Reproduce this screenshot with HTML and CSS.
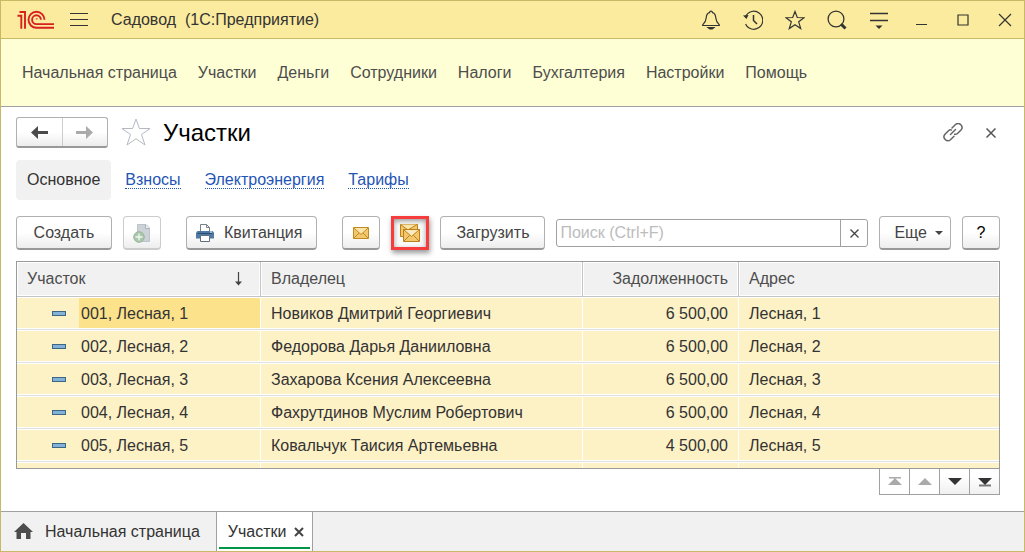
FILE: index.html
```html
<!DOCTYPE html>
<html lang="ru">
<head>
<meta charset="utf-8">
<title>Садовод (1С:Предприятие)</title>
<link rel="stylesheet" href="styles.css">
</head>
<body>
<div class="window">
  <header class="titlebar">
    <svg class="logo" width="38" height="20" viewBox="0 0 38 20" fill="none" stroke="#d9201f" stroke-width="1.9" aria-label="1С">
      <path d="M0.5 5.800H4.300V18.700M2.500 2H8V18.700"/>
      <path d="M27.500 9.700A8 8 0 1 0 19.500 17.800H37"/>
      <path d="M23.900 9.700A4.400 4.400 0 1 0 19.500 14.100H37"/>
      <path d="M20.500 9.200A1 1 0 0 0 19 9.200" stroke-width="1.200"/>
    </svg>
    <button class="icon-button menu-button" aria-label="Главное меню"><svg width="18" height="16" viewBox="0 0 18 16" stroke="#333" stroke-width="1.2"><path d="M0 1.500H18M0 7.500H18M0 13.500H18"/></svg></button>
    <span class="app-name">Садовод&nbsp; (1С:Предприятие)</span>
    <div class="system-buttons">
      <button class="icon-button" aria-label="Уведомления"><svg width="20" height="20" viewBox="0 0 20 20" fill="none" stroke="#333" stroke-width="1.2"><path d="M10 1.2C9 1.2 8.6 1.8 8.5 2.6C5.8 3.4 5.3 5.6 5.2 8C5 11.500 3.500 13 1.700 14.800V15.500H18.300V14.800C16.500 13 15 11.500 14.800 8C14.700 5.600 14.200 3.400 11.500 2.600C11.400 1.800 11 1.200 10 1.200Z"/><path d="M7 17.500H13L11.200 19H8.800Z" fill="#333"/></svg></button>
      <button class="icon-button" aria-label="История"><svg width="20" height="20" viewBox="0 0 20 20" fill="none" stroke="#333" stroke-width="1.2"><path d="M2.600 6.500A9 9 0 1 1 2.600 14"/><path d="M10.500 5V10.500L14 14" stroke-width="1.500"/><path d="M0 5.500L5.500 5L3.500 9Z" fill="#333" stroke="none"/></svg></button>
      <button class="icon-button" aria-label="Избранное"><svg width="20" height="20" viewBox="0 0 20 20" fill="none" stroke="#333" stroke-width="1.2"><path d="M10 1.500L12.300 7.500L19 7.700L13.700 11.800L15.700 18.500L10 14.700L4.300 18.500L6.300 11.800L1 7.700L7.700 7.500Z"/></svg></button>
      <button class="icon-button" aria-label="Поиск"><svg width="20" height="20" viewBox="0 0 20 20" fill="none" stroke="#333" stroke-width="1.300"><circle cx="9" cy="9" r="7.900"/><path d="M14 14L18.500 18.500" stroke-width="3"/></svg></button>
      <button class="icon-button" aria-label="Сервис"><svg width="18" height="20" viewBox="0 0 18 20" stroke="#333" stroke-width="1.300"><path d="M0 3.500H18M0 10.500H18"/><path d="M5.500 15.500H12.500L9 19Z" fill="#333" stroke="none"/></svg></button>
      <button class="icon-button" aria-label="Свернуть"><svg width="12" height="12" viewBox="0 0 12 12" stroke="#333"><path d="M1 10.500H12"/></svg></button>
      <button class="icon-button" aria-label="Развернуть"><svg width="12" height="12" viewBox="0 0 12 12" fill="none" stroke="#333"><path d="M1 1H11V11H1Z" stroke-width="1.200"/></svg></button>
      <button class="icon-button" aria-label="Закрыть"><svg width="14" height="14" viewBox="0 0 14 14" stroke="#333" stroke-width="1.200"><path d="M1 1L13 13M13 1L1 13"/></svg></button>
    </div>
  </header>

  <nav class="sections" aria-label="Разделы">
    <a href="#">Начальная страница</a>
    <a href="#">Участки</a>
    <a href="#">Деньги</a>
    <a href="#">Сотрудники</a>
    <a href="#">Налоги</a>
    <a href="#">Бухгалтерия</a>
    <a href="#">Настройки</a>
    <a href="#">Помощь</a>
  </nav>

  <main class="form">
    <div class="form-header">
      <div class="history">
        <button aria-label="Назад"><svg width="18" height="13" viewBox="0 0 18 13" fill="#4a4a4a"><path d="M0 6.500L7 0V5H17V8H7V13Z"/></svg></button>
        <button aria-label="Вперед" disabled><svg width="18" height="13" viewBox="0 0 18 13" fill="#aaa"><path d="M17 6.500L10 0V5H0V8H10V13Z"/></svg></button>
      </div>
      <button class="icon-button favorite" aria-label="В избранное"><svg width="30" height="29" viewBox="0 0 30 29" fill="none" stroke="#b4bac0"><path d="M15 1L18.400 10.500H29L20.500 16.500L24 27L15 20.800L6 27L9.500 16.500L1 10.500H11.600Z"/></svg></button>
      <h1>Участки</h1>
      <button class="icon-button" aria-label="Получить ссылку"><svg width="20" height="20" viewBox="0 0 20 20" fill="none" stroke="#666" stroke-width="1.500" stroke-linecap="round"><path d="M9 5L12.500 1.500A3.900 3.900 0 0 1 18 7L14.500 10.500C13.700 11.200 12.700 11.500 11.700 11.300"/><path d="M8.300 6.900C7.300 6.700 6.300 7 5.500 7.700L2 11.200A3.900 3.900 0 0 0 7.500 16.700L11 13.200"/><path d="M7.500 11.500L12.500 6.500"/></svg></button>
      <button class="icon-button form-close" aria-label="Закрыть форму"><svg width="10" height="10" viewBox="0 0 10 10" stroke="#555" stroke-width="1.500"><path d="M0.500 0.500L9.500 9.500M9.500 0.500L0.500 9.500"/></svg></button>
    </div>

    <nav class="form-tabs" aria-label="Панель навигации">
      <span class="current">Основное</span>
      <a href="#">Взносы</a>
      <a href="#">Электроэнергия</a>
      <a href="#">Тарифы</a>
    </nav>

    <div class="toolbar">
      <button class="button create">Создать</button>
      <button class="button square" aria-label="Скопировать" disabled><svg width="18" height="20" viewBox="0 0 18 20"><path d="M4.500 1.500H13L16.500 5V18.500H4.500Z" fill="#ccd2d8" stroke="#bcc4ca"/><path d="M12.500 1.500V5.500H16.500" fill="#eee" stroke="#aab4bc"/><circle cx="6" cy="14" r="5.300" fill="#a9c7a9" stroke="#9ab59a"/><path d="M6 10.500V17.500M2.500 14H9.500" stroke="#f4f8f4" stroke-width="1.300"/></svg></button>
      <button class="button print"><svg width="18" height="18" viewBox="0 0 18 18"><path d="M4.500 8V0.500H10.500L13.500 3.500V8" fill="#fff" stroke="#777f88"/><path d="M10.500 0.500V3.500H13.500" fill="none" stroke="#777f88"/><path d="M1.500 7H16.500L18 8.500V14.500H0V8.500Z" fill="#4f78a3"/><path d="M2 9.500H16" stroke="#284a70"/><path d="M14 8H16" stroke="#fff"/><path d="M4.500 11.500H13.500V17.500H4.500Z" fill="#fff" stroke="#5f6f80"/></svg>Квитанция</button>
      <button class="button square" aria-label="Отправить письмо"><svg width="16" height="12" viewBox="0 0 16 12" fill="#f3c86d" stroke="#c48a22"><path d="M0.500 0.500H15.500V11.500H0.500Z"/><path d="M1 1L8 7.500L15 1" fill="#fbe5ad"/><path d="M1 11L6 6M15 11L10 6" fill="none"/></svg></button>
      <button class="button square highlighted" aria-label="Отправить все письма"><svg width="20" height="18" viewBox="0 0 20 18" fill="#f3c86d" stroke="#bc8019"><path d="M0.500 12.500V0.500H17.500V6"/><path d="M0.500 0.500L8 6L17 0.500" fill="#fbe5ad"/><path d="M0.500 12.500H4"/><path d="M3.500 5.500H19.500V17.500H3.500Z"/><path d="M3.500 5.500L11.500 12.500L19.500 5.500Z" fill="#fbe9bd"/><path d="M4 17L9.500 11.500M19 17L13.500 11.500" fill="none"/></svg></button>
      <button class="button">Загрузить</button>
      <div class="search">
        <input type="text" aria-label="Поиск" placeholder="Поиск (Ctrl+F)">
        <button aria-label="Очистить"><svg width="9" height="9" viewBox="0 0 9 9" stroke="#444" stroke-width="1.300"><path d="M0.500 0.500L8.500 8.500M8.500 0.500L0.500 8.500"/></svg></button>
      </div>
      <button class="button more">Еще<svg width="8" height="4" viewBox="0 0 8 4" fill="#444"><path d="M0 0H8L4 4Z"/></svg></button>
      <button class="button square help">?</button>
    </div>

    <div class="list">
      <table>
        <colgroup><col class="col-mark"><col class="col-plot"><col class="col-owner"><col class="col-debt"><col></colgroup>
        <thead>
          <tr>
            <th colspan="2"><div class="sorted">Участок<svg width="9" height="14" viewBox="0 0 9 14" stroke="#444" stroke-width="1.200"><path d="M4.500 0V12"/><path d="M1 9.500H8L4.500 13.500Z" fill="#444" stroke="none"/></svg></div></th>
            <th>Владелец</th>
            <th class="number">Задолженность</th>
            <th>Адрес</th>
          </tr>
        </thead>
        <tbody>
          <tr><td class="mark"><i></i></td><td class="plot selected">001, Лесная, 1</td><td>Новиков Дмитрий Георгиевич</td><td class="number">6 500,00</td><td>Лесная, 1</td></tr>
          <tr><td class="mark"><i></i></td><td class="plot">002, Лесная, 2</td><td>Федорова Дарья Данииловна</td><td class="number">6 500,00</td><td>Лесная, 2</td></tr>
          <tr><td class="mark"><i></i></td><td class="plot">003, Лесная, 3</td><td>Захарова Ксения Алексеевна</td><td class="number">6 500,00</td><td>Лесная, 3</td></tr>
          <tr><td class="mark"><i></i></td><td class="plot">004, Лесная, 4</td><td>Фахрутдинов Муслим Робертович</td><td class="number">6 500,00</td><td>Лесная, 4</td></tr>
          <tr><td class="mark"><i></i></td><td class="plot">005, Лесная, 5</td><td>Ковальчук Таисия Артемьевна</td><td class="number">4 500,00</td><td>Лесная, 5</td></tr>
          <tr><td class="mark"></td><td class="plot"></td><td></td><td></td><td></td></tr>
        </tbody>
      </table>
    </div>

    <div class="pager">
      <button aria-label="В начало" disabled><svg width="14" height="10" viewBox="0 0 14 10" fill="#aaa"><path d="M1 0H13V1.500H1ZM7 1L14 8H0Z"/></svg></button>
      <button aria-label="Назад по списку" disabled><svg width="14" height="10" viewBox="0 0 14 10" fill="#aaa"><path d="M7 1L14 8H0Z"/></svg></button>
      <button aria-label="Вперед по списку"><svg width="14" height="10" viewBox="0 0 14 10" fill="#333"><path d="M0 1H14L7 8Z"/></svg></button>
      <button aria-label="В конец"><svg width="14" height="10" viewBox="0 0 14 10" fill="#333"><path d="M1 7.500H13V9.500H1Z" fill="#777"/><path d="M0 1H14L7 8Z"/></svg></button>
    </div>
  </main>

  <footer class="taskbar">
    <a class="task" href="#"><svg width="19" height="17" viewBox="0 0 19 17" fill="#4c4c4c"><path d="M9.500 0L19 9H16.500V16H12V10H7V16H2.500V9H0Z"/></svg>Начальная страница</a>
    <div class="task active"><span>Участки</span><button class="icon-button" aria-label="Закрыть вкладку"><svg width="10" height="10" viewBox="0 0 10 10" stroke="#444" stroke-width="2"><path d="M1 1L9 9M9 1L1 9"/></svg></button></div>
  </footer>
</div>
</body>
</html>
```
FILE: styles.css
```css
* {
  box-sizing: border-box;
}

body {
  margin: 0;
  font: 16px/20px "Liberation Sans", Arial, sans-serif;
  color: #333;
}

button,
input {
  font: inherit;
  color: inherit;
  padding: 0;
  margin: 0;
}

a {
  color: inherit;
  text-decoration: none;
}

svg {
  display: block;
  flex: none;
}

.window {
  display: flex;
  flex-direction: column;
  height: 100vh;
  border: 1px solid #c9b866;
  background: #fff;
}

.icon-button {
  display: flex;
  align-items: center;
  justify-content: center;
  border: 0;
  background: none;
}

/* Title bar */
.titlebar {
  display: flex;
  align-items: center;
  height: 38px;
  padding: 0 1px 0 16px;
  background: #fbeb9e;
  border-bottom: 1px solid #c9b866;
}

.menu-button {
  width: 18px;
  margin-left: 15px;
}

.app-name {
  margin-left: 23px;
}

.system-buttons {
  display: flex;
  gap: 6px;
  margin-left: auto;
}

.system-buttons .icon-button {
  width: 36px;
  height: 36px;
}

/* Sections */
.sections {
  display: flex;
  align-items: center;
  gap: 21px;
  height: 68px;
  padding: 0 21px;
  background: #ffffd5;
  border-bottom: 1px solid #a0a0a0;
  color: #4d4d4d;
}

/* Form */
.form {
  display: flex;
  flex: 1;
  flex-direction: column;
  min-height: 0;
  padding: 10px 24px 16px 15px;
}

.form-header {
  display: flex;
  align-items: center;
  height: 31px;
}

.history {
  display: flex;
  height: 31px;
  border: 1px solid #b0b0b0;
  border-bottom: 2px solid #999;
  border-radius: 3px;
  background: linear-gradient(#fff 50%, #ededed);
}

.history button {
  display: flex;
  align-items: center;
  justify-content: center;
  width: 45px;
  border: 0;
  background: none;
}

.history button + button {
  border-left: 1px solid #ccc;
}

.favorite {
  margin: 0 12px 0 13px;
}

h1 {
  flex: 1;
  margin: 0;
  font-size: 24px;
  line-height: 28px;
  font-weight: normal;
  color: #000;
}

.form-close {
  width: 18px;
  margin-left: 19px;
}

.form-tabs {
  display: flex;
  align-items: center;
  gap: 24px;
  margin-top: 12px;
  color: #1f55b5;
}

.form-tabs .current {
  margin-right: -10px;
  padding: 10px 11px;
  border-radius: 4px;
  background: #f1f1f1;
  color: #333;
}

.form-tabs a {
  line-height: 17px;
  border-bottom: 1px dotted #1f55b5;
}

/* Toolbar */
.toolbar {
  display: flex;
  align-items: center;
  gap: 11px;
  margin: 16px 0 11px;
}

.button {
  display: flex;
  align-items: center;
  justify-content: center;
  height: 34px;
  padding: 0 15px;
  border: 1px solid #b0b0b0;
  border-bottom: 2px solid #999;
  border-radius: 4px;
  background: linear-gradient(#fff 50%, #ededed);
  color: #444;
}

.button:disabled {
  border-color: #ccc;
}

.create {
  min-width: 96px;
}

.square {
  width: 38px;
  padding: 0;
}

.print {
  gap: 10px;
  margin: 0 14px;
  padding: 0 14px 0 9px;
}

.highlighted {
  border: 3px solid #f63c3c;
  border-radius: 0;
  background: #fafafa;
  box-shadow: 1px 3px 5px #999, inset 0 2px 5px #999;
}

.search {
  display: flex;
  flex: 1;
  height: 28px;
  border: 1px solid #a0a0a0;
  border-radius: 3px;
  background: #fff;
}

.search input {
  flex: 1;
  min-width: 0;
  padding: 0 3px;
  border: 0;
  background: none;
}

.search input::placeholder {
  color: #bcbcbc;
}

.search button {
  display: flex;
  align-items: center;
  justify-content: center;
  width: 27px;
  border: 0;
  border-left: 1px solid #a0a0a0;
  background: none;
}

.more {
  gap: 8px;
  padding: 0 7px 0 14px;
}

.help {
  color: #000;
}

/* List */
.list {
  flex: 1;
  min-height: 0;
  overflow: hidden;
  border: 1px solid #999;
}

table {
  width: 100%;
  table-layout: fixed;
  border-spacing: 0;
}

.col-mark {
  width: 62px;
}

.col-plot {
  width: 182px;
}

.col-owner {
  width: 322px;
}

.col-debt {
  width: 156px;
}

th {
  height: 35px;
  padding: 0 10px;
  border-right: 1px solid #c4c4c4;
  border-bottom: 1px solid #c4c4c4;
  background: #f1f1f1;
  box-shadow: inset 0 0 0 1px #fff;
  font-weight: normal;
  text-align: left;
  color: #4d4d4d;
}

th:last-child {
  border-right: 0;
}

.sorted {
  display: flex;
  align-items: center;
  justify-content: space-between;
  padding-right: 7px;
}

td {
  height: 33px;
  padding: 0 11px 0 10px;
  border-top: 1px solid #fff;
  border-bottom: 1px solid #e0e0e0;
  background: #fdf1c6;
  box-shadow: inset -1px -1px #fff;
  white-space: nowrap;
}

td:last-child,
.mark {
  box-shadow: inset 0 -1px #fff;
}

.mark {
  padding: 0 0 0 35px;
}

.mark i {
  display: block;
  width: 14px;
  height: 5px;
  border: 1px solid #3f6585;
  background: #82b2d8;
}

.plot {
  padding: 0 2px;
}

.selected {
  background: #fde28c;
}

.number {
  text-align: right;
}

.pager {
  display: flex;
  justify-content: flex-end;
}

.pager button {
  display: flex;
  align-items: center;
  justify-content: center;
  width: 30px;
  height: 26px;
  border: 1px solid #a0a0a0;
  border-width: 0 1px 1px 0;
  background: linear-gradient(#fff 30%, #f0f0f0);
}

.pager button:first-child {
  width: 31px;
  border-left-width: 1px;
}

.pager button:disabled {
  background: #fff;
}

/* Open windows */
.taskbar {
  display: flex;
  height: 40px;
  border-top: 1px solid #a0a0a0;
  background: #f1f1f1;
}

.task {
  display: flex;
  align-items: center;
  gap: 12px;
  padding: 0 16px 0 13px;
}

.active {
  gap: 8px;
  padding: 0 8px 0 11px;
  border: 1px solid #a0a0a0;
  border-width: 0 1px;
  background: linear-gradient(#009646, #009646) center bottom 2px / calc(100% - 4px) 2px no-repeat #fff;
}
```
